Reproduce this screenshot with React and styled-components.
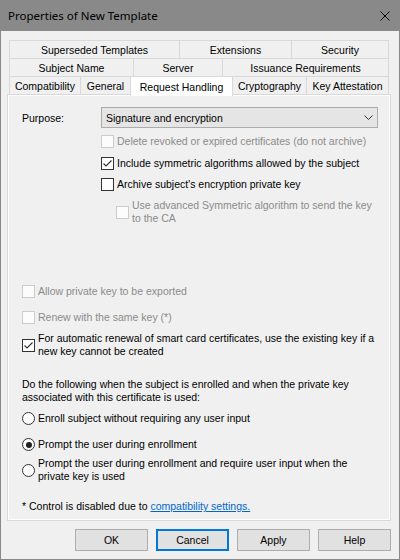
import React from "react";
import styled, { createGlobalStyle } from "styled-components";

const GlobalStyle = createGlobalStyle`
  html, body {
    margin: 0;
    padding: 0;
    background: #f0f0f0;
  }
  * {
    box-sizing: border-box;
  }
`;

const Window = styled.div`
  width: 400px;
  height: 560px;
  display: flex;
  flex-direction: column;
  background: #f0f0f0;
  border: 1px solid #898989;
  border-top: none;
  font-family: "Liberation Sans", Arial, sans-serif;
  font-size: 10.5px;
  color: #000;
`;

const TitleBar = styled.div`
  height: 31px;
  flex: none;
  display: flex;
  align-items: center;
  justify-content: space-between;
  background: #898989;
  padding: 0 10px 0 8px;
  margin: 0 -1px;
  font-family: "Noto Sans", "Open Sans", sans-serif;
  font-size: 11.5px;
  color: #000;
`;

const Body = styled.div`
  flex: 1;
  display: flex;
  flex-direction: column;
  padding: 9px 8px 0 6px;
`;

const TabRow = styled.div`
  display: flex;
  align-items: flex-end;
  margin-left: 2px;
  margin-top: ${(p) => (p.$first ? "0" : "-1px")};
`;

const Tab = styled.div`
  width: ${(p) => p.$w}px;
  height: ${(p) => (p.$selected ? 20 : p.$last ? 18 : 19)}px;
  margin-left: ${(p) => (p.$start ? "0" : "-1px")};
  margin-bottom: ${(p) => (p.$selected ? "-2px" : "0")};
  display: flex;
  align-items: center;
  justify-content: center;
  padding-top: ${(p) => (p.$selected ? "0" : "1px")};
  border: 1px solid #d9d9d9;
  border-bottom: ${(p) => (p.$last ? "none" : "1px solid #d9d9d9")};
  background: ${(p) => (p.$selected ? "#ffffff" : "#f0f0f0")};
  position: relative;
  z-index: ${(p) => (p.$selected ? 2 : 0)};
  white-space: nowrap;
`;

const Panel = styled.div`
  width: 384px;
  height: 427px;
  border: 1px solid #d9d9d9;
  box-shadow: inset 0 0 0 1px #ffffff;
  background: #f0f0f0;
  display: flex;
  flex-direction: column;
  padding-top: 12px;
`;

const PurposeRow = styled.div`
  display: flex;
  align-items: center;
  padding-left: 14px;
`;

const Label = styled.div`
  width: 79px;
`;

const Combo = styled.div`
  width: 277px;
  height: 21px;
  display: flex;
  align-items: center;
  justify-content: space-between;
  padding: 0 4px 0 4px;
  background: #e5e5e5;
  border: 1px solid #acacac;
`;

const Row = styled.div`
  display: flex;
  align-items: center;
  padding-left: ${(p) => p.$indent}px;
  margin-top: ${(p) => p.$gap}px;
  color: ${(p) => (p.$disabled ? "#8b8b8b" : "#000")};
  line-height: 13px;
`;

const Box = styled.div`
  width: 13px;
  height: 13px;
  flex: none;
  margin-right: 3px;
  border: 1px solid ${(p) => (p.$disabled ? "#cccccc" : "#333333")};
  background: ${(p) => (p.$disabled ? "#fcfcfc" : "#ffffff")};
  display: flex;
  align-items: center;
  justify-content: center;
`;

const Radio = styled.div`
  width: 13px;
  height: 13px;
  flex: none;
  margin-right: 3px;
  border-radius: 50%;
  border: 1px solid #333333;
  background: #ffffff;
  display: flex;
  align-items: center;
  justify-content: center;
  &::after {
    content: "";
    display: ${(p) => (p.$checked ? "block" : "none")};
    width: 6px;
    height: 6px;
    border-radius: 50%;
    background: #222;
  }
`;

const Text = styled.div`
  line-height: 13px;
  white-space: nowrap;
`;

const Link = styled.span`
  color: #0066cc;
  text-decoration: underline;
`;

const Buttons = styled.div`
  display: flex;
  justify-content: flex-end;
  gap: 8px;
  margin-top: 8px;
`;

const Button = styled.div`
  width: 73px;
  height: 22px;
  display: flex;
  align-items: center;
  justify-content: center;
  background: #e1e1e1;
  border: ${(p) => (p.$default ? "2px solid #0078d7" : "1px solid #adadad")};
`;

function Check({ checked, disabled }) {
  return (
    <Box $disabled={disabled}>
      {checked && (
        <svg width="11" height="11" viewBox="0 0 11 11">
          <path d="M1.5 5.5 L4 8 L9.5 2.5" fill="none" stroke="#333" strokeWidth="1.1" />
        </svg>
      )}
    </Box>
  );
}

function CheckRow({ indent, gap, checked, disabled, children }) {
  return (
    <Row $indent={indent} $gap={gap} $disabled={disabled}>
      <Check checked={checked} disabled={disabled} />
      <Text>{children}</Text>
    </Row>
  );
}

function RadioRow({ gap, checked, children }) {
  return (
    <Row $indent={14} $gap={gap}>
      <Radio $checked={checked} />
      <Text>{children}</Text>
    </Row>
  );
}

const tabRows = [
  [
    ["Superseded Templates", 171],
    ["Extensions", 113],
    ["Security", 98],
  ],
  [
    ["Subject Name", 125],
    ["Server", 90],
    ["Issuance Requirements", 167],
  ],
  [
    ["Compatibility", 72],
    ["General", 51],
    ["Request Handling", 103, true],
    ["Cryptography", 75],
    ["Key Attestation", 83],
  ],
];

export default function App() {
  return (
    <>
      <GlobalStyle />
      <Window>
        <TitleBar>
          <span>Properties of New Template</span>
          <svg width="10" height="10" viewBox="0 0 10 10">
            <path d="M0.5 0.5 L9.5 9.5 M9.5 0.5 L0.5 9.5" stroke="#000" strokeWidth="1" />
          </svg>
        </TitleBar>
        <Body>
          {tabRows.map((row, i) => (
            <TabRow key={i} $first={i === 0}>
              {row.map(([name, w, sel], j) => (
                <Tab key={name} $w={w} $start={j === 0} $selected={sel} $last={i === 2}>
                  {name}
                </Tab>
              ))}
            </TabRow>
          ))}
          <Panel>
            <PurposeRow>
              <Label>Purpose:</Label>
              <Combo>
                <span>Signature and encryption</span>
                <svg width="9" height="5" viewBox="0 0 9 5">
                  <path d="M0.5 0.5 L4.5 4.5 L8.5 0.5" fill="none" stroke="#333" strokeWidth="1" />
                </svg>
              </Combo>
            </PurposeRow>
            <CheckRow indent={93} gap={7} disabled>
              Delete revoked or expired certificates (do not archive)
            </CheckRow>
            <CheckRow indent={93} gap={9} checked>
              Include symmetric algorithms allowed by the subject
            </CheckRow>
            <CheckRow indent={93} gap={8}>
              Archive subject's encryption private key
            </CheckRow>
            <CheckRow indent={108} gap={8} disabled>
              Use advanced Symmetric algorithm to send the key
              <br />
              to the CA
            </CheckRow>
            <CheckRow indent={14} gap={60} disabled>
              Allow private key to be exported
            </CheckRow>
            <CheckRow indent={14} gap={13} disabled>
              Renew with the same key (*)
            </CheckRow>
            <CheckRow indent={14} gap={8} checked>
              For automatic renewal of smart card certificates, use the existing key if a
              <br />
              new key cannot be created
            </CheckRow>
            <Row $indent={14} $gap={20}>
              <Text>
                Do the following when the subject is enrolled and when the private key
                <br />
                associated with this certificate is used:
              </Text>
            </Row>
            <RadioRow gap={8}>Enroll subject without requiring any user input</RadioRow>
            <RadioRow gap={13} checked>
              Prompt the user during enrollment
            </RadioRow>
            <RadioRow gap={6}>
              Prompt the user during enrollment and require user input when the
              <br />
              private key is used
            </RadioRow>
            <Row $indent={14} $gap={17}>
              <Text>
                * Control is disabled due to <Link>compatibility settings.</Link>
              </Text>
            </Row>
          </Panel>
          <Buttons>
            <Button>OK</Button>
            <Button $default>Cancel</Button>
            <Button>Apply</Button>
            <Button>Help</Button>
          </Buttons>
        </Body>
      </Window>
    </>
  );
}
